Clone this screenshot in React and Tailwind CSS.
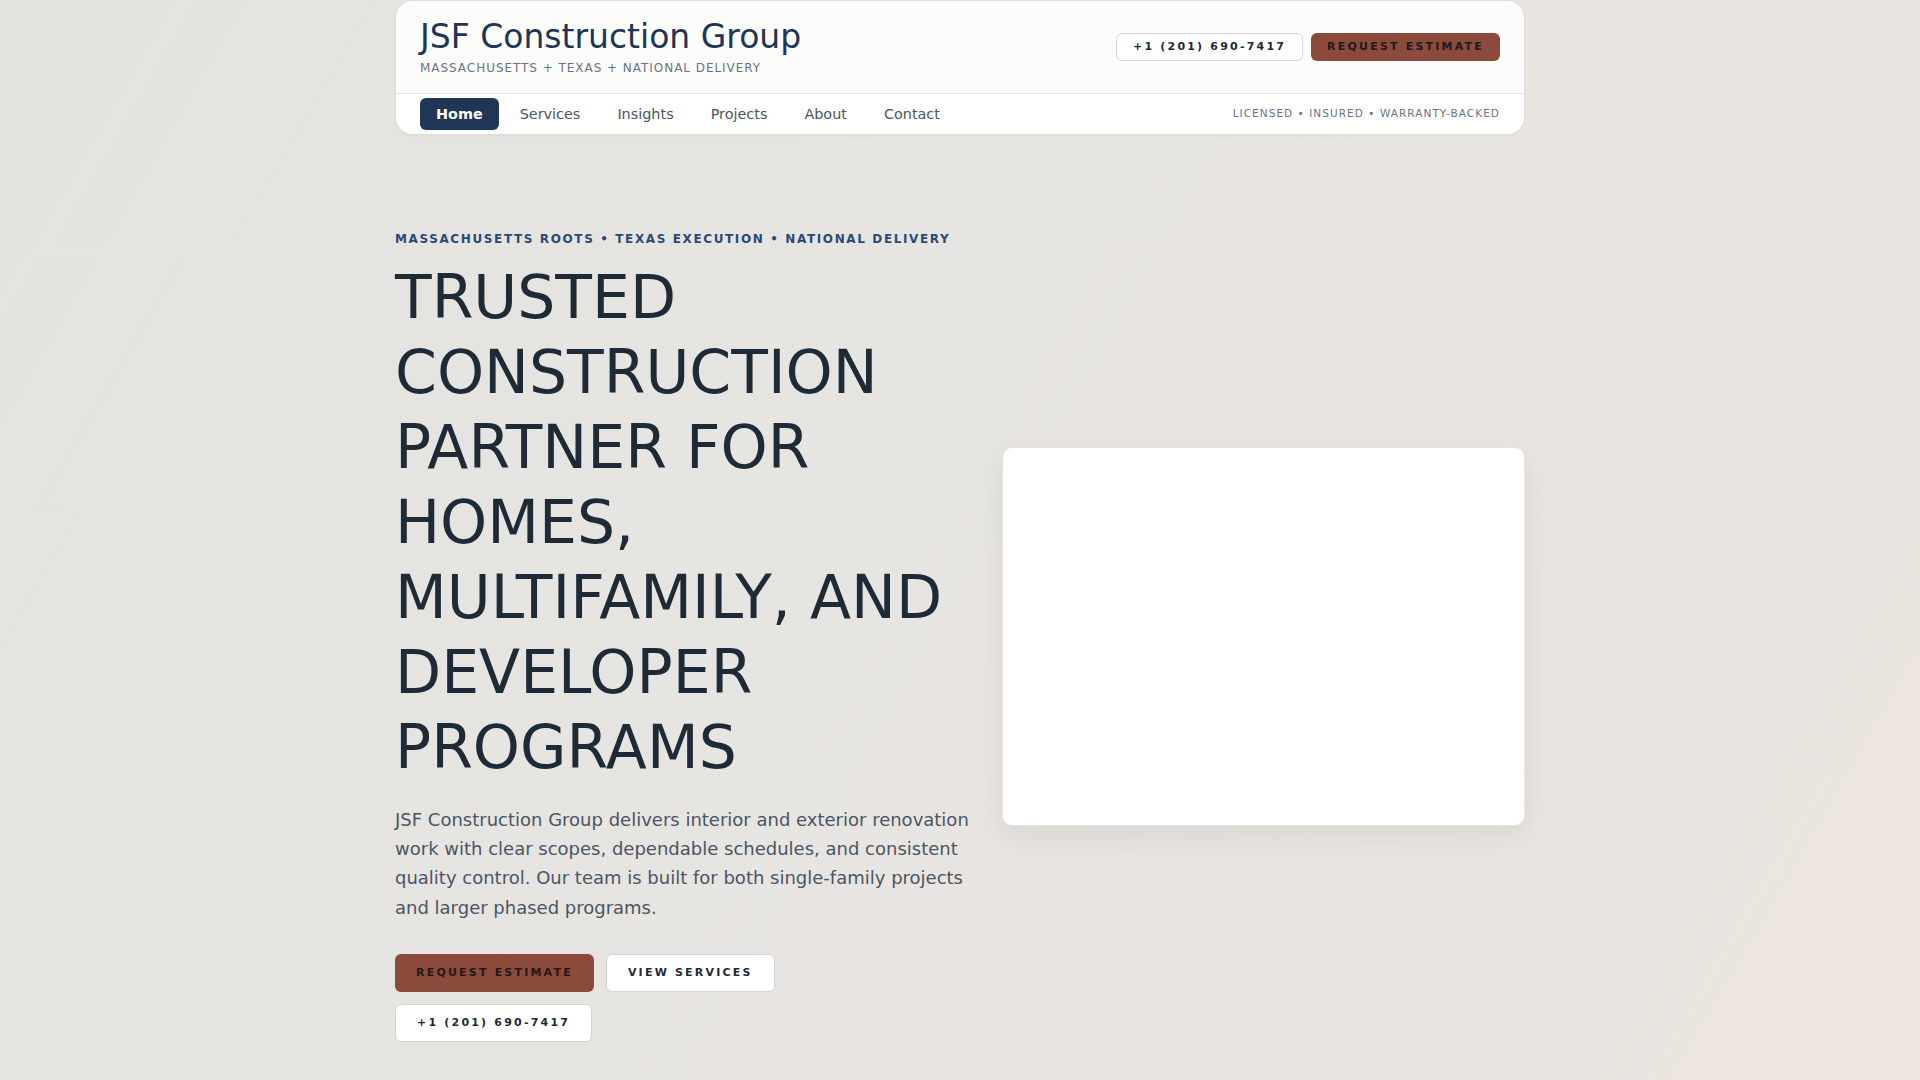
export default function App() {
  const links = ["Services", "Insights", "Projects", "About", "Contact"];
  return (
    <div className="min-h-screen w-full bg-[linear-gradient(120deg,#e4e3e0_0%,#e7e5e2_45%,#e9e5e1_75%,#ede5e0_100%)] font-['DejaVu_Sans',sans-serif] text-[#1f2a37]">
      <div className="mx-auto w-[1130px]">
        <header className="overflow-hidden rounded-b-[18px] rounded-t-[18px] border border-[#dedfe0] bg-[#fcfcfb] shadow-[0_1px_3px_rgba(0,0,0,0.04)]">
          <div className="flex items-center justify-between px-6 pb-[17px] pt-4">
            <div>
              <div className="text-[33px] leading-[1.2] text-[#1e3556]">JSF Construction Group</div>
              <div className="mt-[3px] text-[12px] leading-4 tracking-[0.08em] text-[#6b7280]">
                MASSACHUSETTS + TEXAS + NATIONAL DELIVERY
              </div>
            </div>
            <div className="flex items-center gap-2 pt-[2px]">
              <button className="flex h-7 items-center rounded-md border border-[#d1d5db] bg-white px-4 text-[11px] font-bold leading-[14px] tracking-[0.2em] text-[#1f2937]">
                +1 (201) 690-7417
              </button>
              <button className="flex h-7 items-center rounded-md bg-[#8b4a3c] px-4 text-[11px] font-bold leading-[14px] tracking-[0.2em] text-[#1f1a19]">
                REQUEST ESTIMATE
              </button>
            </div>
          </div>
          <nav className="flex items-center justify-between border-t border-[#e3e4e6] bg-white px-6 pb-[4px] pt-[4px]">
            <div className="flex items-center gap-[5px]">
              <a className="rounded-md bg-[#1f3656] px-4 py-1.5 text-[14.4px] font-bold leading-5 text-white">Home</a>
              {links.map((l) => (
                <a key={l} className="px-4 py-1.5 text-[14.4px] leading-5 text-[#4b5563]">
                  {l}
                </a>
              ))}
            </div>
            <div className="text-[10.5px] tracking-[0.1em] text-[#6b7280]">
              LICENSED • INSURED • WARRANTY-BACKED
            </div>
          </nav>
        </header>

        <section className="grid grid-cols-[1.1fr_1fr] items-center gap-8 pb-9 pt-24">
          <div>
            <div className="text-[12px] font-bold leading-4 tracking-[0.135em] text-[#2a4a75]">
              MASSACHUSETTS ROOTS • TEXAS EXECUTION • NATIONAL DELIVERY
            </div>
            <h1 className="mt-[13px] text-[60px] font-normal leading-[75px] text-[#1f2a37]">
              TRUSTED CONSTRUCTION PARTNER FOR HOMES, MULTIFAMILY, AND DEVELOPER PROGRAMS
            </h1>
            <p className="mt-5 text-[18px] leading-[29.4px] text-[#4b5563]">
              JSF Construction Group delivers interior and exterior renovation work with clear scopes, dependable
              schedules, and consistent quality control. Our team is built for both single-family projects and larger
              phased programs.
            </p>
            <div className="mt-8 flex flex-wrap gap-3">
              <button className="h-[38px] rounded-md bg-[#8b4a3c] px-[21px] text-[11px] font-bold leading-[14px] tracking-[0.2em] text-[#1f1a19]">
                REQUEST ESTIMATE
              </button>
              <button className="h-[38px] rounded-md border border-[#d1d5db] bg-white px-[21px] text-[11px] font-bold leading-[14px] tracking-[0.2em] text-[#1f2937]">
                VIEW SERVICES
              </button>
              <button className="h-[38px] rounded-md border border-[#d1d5db] bg-white px-[21px] text-[11px] font-bold leading-[14px] tracking-[0.2em] text-[#1f2937]">
                +1 (201) 690-7417
              </button>
            </div>
          </div>
          <div className="h-[379px] rounded-[10px] border border-[#e4e4e4] bg-white shadow-[0_10px_30px_rgba(0,0,0,0.07)]"></div>
        </section>
      </div>
    </div>
  );
}
